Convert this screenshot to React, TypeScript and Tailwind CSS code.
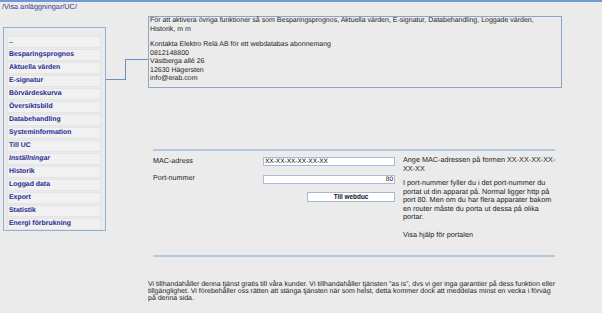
import React from "react";

const items = [
  "..",
  "Besparingsprognos",
  "Aktuella värden",
  "E-signatur",
  "Börvärdeskurva",
  "Översiktsbild",
  "Databehandling",
  "Systeminformation",
  "Till UC",
  "Inställningar",
  "Historik",
  "Loggad data",
  "Export",
  "Statistik",
  "Energi förbrukning",
];

export default function App() {
  return (
    <div className="w-[602px] h-[313px] overflow-hidden bg-[#ebebeb] font-['Liberation_Sans',Arial,sans-serif] text-[#1e1e1e] [text-rendering:geometricPrecision]">
      <div className="h-[2px] bg-[#6f9bd1]" />
      <div className="h-[14px] pl-[2px] text-[7.3px] leading-[10px] text-[#2a3592]">/Visa anläggningar/UC/</div>
      <div className="flex items-start">
        {/* Sidebar */}
        <nav className="ml-[3px] mt-[11px] w-[103px] border border-[#93afd4] pl-[3px] pr-[4px] pt-[8px] flex flex-col gap-[1px]">
          {items.map((it) => (
            <div
              key={it}
              className={
                "h-[12px] border border-[#e4e4e4] bg-[#f1f1f1] pl-[1px] text-[6.9px] font-bold leading-[10px] text-[#1f2b94] whitespace-nowrap" +
                (it === "Inställningar" ? " italic" : "")
              }
            >
              {it}
            </div>
          ))}
        </nav>

        {/* Connector */}
        <div className="w-[42px] mt-[43px] flex items-start">
          <div className="w-[20px] h-[21px] border-r border-b border-[#6a8fc2]" />
          <div className="flex-1 border-t border-[#6a8fc2]" />
        </div>

        {/* Right column */}
        <div className="w-[414px] flex flex-col">
          <div className="h-[72px] border border-[#8fa5c6] pl-[1px] text-[7px] leading-[8.5px]">
            <div className="whitespace-nowrap">
              För att aktivera övriga funktioner så som Besparingsprognos, Aktuella värden, E-signatur, Databehandling, Loggade värden,
              <br />
              Historik, m m
            </div>
            <div className="h-[7px]" />
            <div>Kontakta Elektro Relä AB för ett webdatabas abonnemang</div>
            <div>0812148800</div>
            <div>Västberga allé 26</div>
            <div>12630 Hägersten</div>
            <div>info@erab.com</div>
          </div>

          <div className="mt-[61px] ml-[5px] w-[402px] h-[2px] bg-[#b3c7df]" />

          <div className="mt-[5px] flex items-start">
            <div className="ml-[5px] pt-[1px] flex flex-col">
              <div className="flex h-[18px] items-start">
                <div className="w-[110px] text-[7.2px] leading-[8px]">MAC-adress</div>
                <div className="w-[132px] h-[9px] border border-[#a8bcd8] bg-white pl-[1px] text-[6.5px] leading-[7px] text-black">
                  XX-XX-XX-XX-XX-XX
                </div>
              </div>
              <div className="flex h-[17px] items-start">
                <div className="w-[110px] -mt-[1px] text-[7.2px] leading-[8px]">Port-nummer</div>
                <div className="w-[132px] h-[9px] border border-[#a8bcd8] bg-white pr-[1px] text-right text-[6.5px] leading-[7px] text-black">
                  80
                </div>
              </div>
              <div className="flex">
                <div className="w-[110px]" />
                <button className="ml-[44px] w-[88px] h-[10px] border border-[#a9b8cc] bg-white text-[6.4px] font-bold leading-[8px] text-[#111]">
                  Till webduc
                </button>
              </div>
            </div>

            <div className="ml-[8px] w-[154px] text-[7.25px] leading-[8.5px] whitespace-nowrap">
              <p>
                Ange MAC-adressen på formen XX-XX-XX-XX-
                <br />
                XX-XX
              </p>
              <p className="mt-[6.3px]">
                I port-nummer fyller du i det port-nummer du
                <br />
                portat ut din apparat på. Normal ligger http på
                <br />
                port 80. Men om du har flera apparater bakom
                <br />
                en router måste du porta ut dessa på olika
                <br />
                portar.
              </p>
              <p className="mt-[9px]">Visa hjälp för portalen</p>
            </div>
          </div>

          <div className="mt-[16px] ml-[5px] w-[402px] h-[2px] bg-[#b3c7df]" />

          <div className="mt-[24px] text-[7px] leading-[7px] whitespace-nowrap">
            Vi tillhandahåller denna tjänst gratis till våra kunder. Vi tillhandahåller tjänsten "as is", dvs vi ger inga garantier på dess funktion eller
            <br />
            tillgänglighet. Vi förebehåller oss rätten att stänga tjänsten när som helst, detta kommer dock att meddelas minst en vecka i förväg
            <br />
            på denna sida.
          </div>
        </div>
      </div>
    </div>
  );
}
